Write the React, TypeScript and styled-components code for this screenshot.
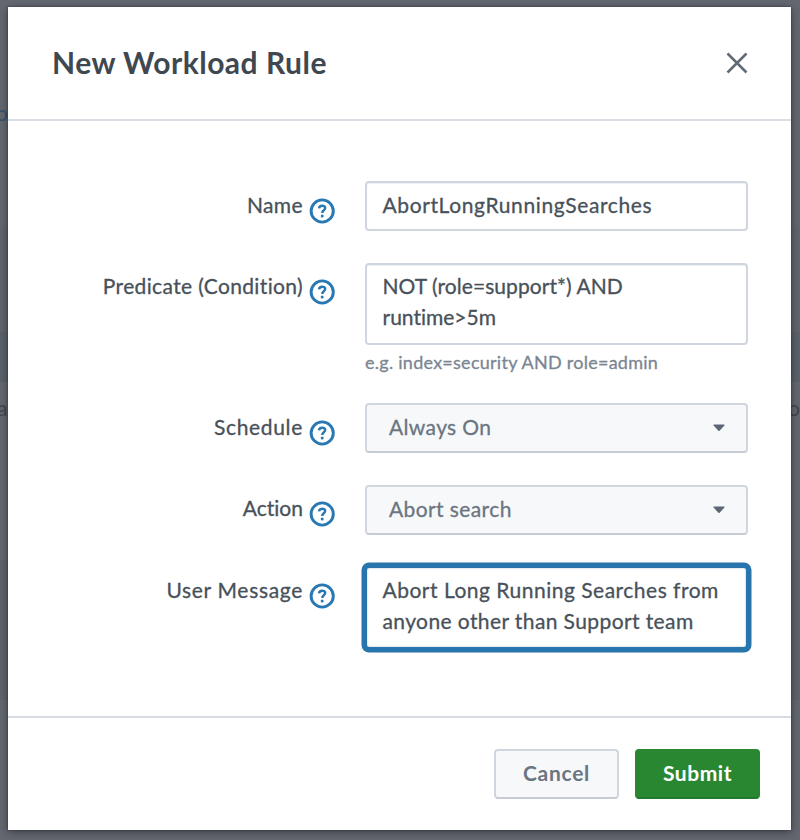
import React from "react";
import styled, { createGlobalStyle } from "styled-components";

const GlobalStyle = createGlobalStyle`
  * { box-sizing: border-box; }
  body {
    margin: 0;
    background: #646870;
    font-family: Lato, "Liberation Sans", sans-serif;
    font-variant-ligatures: none;
  }
`;

const Backdrop = styled.div`
  position: relative;
  width: 800px;
  height: 840px;
  padding: 7px 9px 10px 8px;
  overflow: hidden;
  background: linear-gradient(#646870 0 225px, #62666c 225px 332px, #5b626b 332px 382px, #646870 382px 560px, #5f646c 560px 700px, #646870 700px);
`;

const PageText = styled.span<{ $x: number; $y: number; $color: string }>`
  position: absolute;
  left: ${(p) => p.$x}px;
  top: ${(p) => p.$y}px;
  font-size: 21px;
  line-height: 24px;
  color: ${(p) => p.$color};
`;

const Dialog = styled.section`
  position: relative;
  display: flex;
  flex-direction: column;
  height: 823px;
  background: #fff;
  box-shadow: 0 0 2px rgba(25, 28, 34, 0.6), 0 2px 9px rgba(25, 28, 34, 0.55);
`;

const Header = styled.header`
  display: flex;
  align-items: center;
  justify-content: space-between;
  height: 114px;
  padding: 0 43px 1px 44px;
  border-bottom: 2px solid #d9dfe5;
`;

const Title = styled.h1`
  margin: 0;
  padding-bottom: 2px;
  font-size: 30px;
  line-height: 36px;
  font-weight: 700;
  letter-spacing: 0.5px;
  color: #3f4851;
`;

const CloseButton = styled.button`
  display: flex;
  padding: 0;
  border: 0;
  background: none;
`;

const Form = styled.form`
  display: flex;
  flex: 1;
  flex-direction: column;
  padding: 60px 43px 0 43px;
`;

const Row = styled.div<{ $height: number }>`
  display: grid;
  grid-template-columns: 283.5px 383px;
  column-gap: 30.5px;
  height: ${(p) => p.$height}px;
`;

const Label = styled.label<{ $spacing: number }>`
  display: flex;
  justify-content: flex-end;
  align-items: flex-start;
  gap: 5.5px;
  padding-top: 7.5px;
  font-size: 21px;
  line-height: 31px;
  letter-spacing: ${(p) => p.$spacing}px;
  color: #48515a;
  -webkit-text-stroke: 0.3px #48515a;
  white-space: nowrap;
`;

const HelpSvg = styled.svg`
  flex: none;
  margin-top: 9px;
`;

const Box = styled.div<{ $height: number; $focused?: boolean }>`
  height: ${(p) => p.$height}px;
  padding: 5.5px 15.5px;
  border: 2px solid ${(p) => (p.$focused ? "#2874ad" : "#d0d6df")};
  border-radius: 4px;
  background: #fff;
  box-shadow: ${(p) => (p.$focused ? "0 0 0 3.5px #2874ad, inset 0 0 2px #9fb3c6" : "inset 0 1px 1px #eef1f4")};
`;

const Line = styled.div<{ $spacing: number }>`
  font-size: 21px;
  line-height: 31px;
  letter-spacing: ${(p) => p.$spacing}px;
  color: #48515a;
  -webkit-text-stroke: 0.3px #48515a;
  white-space: nowrap;
`;

const Hint = styled.div`
  margin-top: 5.5px;
  font-size: 18px;
  line-height: 24px;
  letter-spacing: 0.26px;
  color: #7b8591;
  -webkit-text-stroke: 0.3px #7b8591;
  white-space: nowrap;
`;

const Select = styled.button<{ $spacing: number }>`
  display: flex;
  align-items: center;
  justify-content: space-between;
  width: 100%;
  height: 50px;
  padding: 0 21px 0 22px;
  border: 2px solid #d0d6df;
  border-bottom-color: #c6ccd5;
  border-radius: 4px;
  background: #f6f8fa;
  font: 400 21px/31px Lato, sans-serif;
  letter-spacing: ${(p) => p.$spacing}px;
  color: #6b7581;
  -webkit-text-stroke: 0.3px #6b7581;
`;

const SelectText = styled.span`
  padding-bottom: 3px;
`;

const Footer = styled.footer`
  display: flex;
  justify-content: flex-end;
  gap: 16px;
  height: 114px;
  padding: 31px 31px 0 0;
  border-top: 2px solid #d7dce4;
`;

const ActionButton = styled.button<{ $primary?: boolean; $spacing: number }>`
  width: 125px;
  height: 50px;
  padding: 0 0 3px;
  border: 2px solid ${(p) => (p.$primary ? "#2a8731" : "#d0d6df")};
  border-bottom-color: ${(p) => (p.$primary ? "#20782a" : "#c6ccd5")};
  border-radius: 4px;
  background: ${(p) => (p.$primary ? "#2a8731" : "#f6f8fa")};
  font: 700 21px/31px Lato, sans-serif;
  letter-spacing: ${(p) => p.$spacing}px;
  color: ${(p) => (p.$primary ? "#fff" : "#6b7581")};
`;

function HelpIcon() {
  return (
    <HelpSvg width="26" height="26" viewBox="0 0 26 26" fill="none" stroke="#2878b3">
      <circle cx="13.2" cy="13" r="11.1" strokeWidth="2.9" />
      <path d="M10 10.3C10.2 8.5 11.4 7.7 13.1 7.7C15 7.7 16.2 8.6 16.2 10.1C16.2 12.4 13.2 12.2 13.2 15" strokeWidth="2.4" />
      <circle cx="13.2" cy="18" r="1.5" fill="#2878b3" stroke="none" />
    </HelpSvg>
  );
}

function FieldLabel({ text, spacing }: { text: string; spacing: number }) {
  return (
    <Label $spacing={spacing}>
      <span>{text}</span>
      <HelpIcon />
    </Label>
  );
}

function Caret() {
  return (
    <svg width="12" height="8" viewBox="0 0 12 8">
      <path d="M1 0.5H11Q12 0.8 11.4 1.6L6.6 6.7Q6 7.3 5.4 6.7L0.6 1.6Q0 0.8 1 0.5Z" fill="#5c6773" />
    </svg>
  );
}

export default function App() {
  return (
    <>
      <GlobalStyle />
      <Backdrop>
        <PageText $x={-4} $y={101} $color="#34536d">o</PageText>
        <PageText $x={-3} $y={396} $color="#42474f">a</PageText>
        <PageText $x={788} $y={396} $color="#42474f">o</PageText>
        <Dialog>
          <Header>
            <Title>New Workload Rule</Title>
            <CloseButton type="button" aria-label="Close">
              <svg width="22" height="22" viewBox="0 0 22 22" stroke="#606b77" strokeWidth="2.5">
                <path d="M1.5 1.5L20.5 20.5M20.5 1.5L1.5 20.5" />
              </svg>
            </CloseButton>
          </Header>
          <Form>
            <Row $height={81.5}>
              <FieldLabel text="Name" spacing={0.4} />
              <Box $height={50}>
                <Line $spacing={0.62}>AbortLongRunningSearches</Line>
              </Box>
            </Row>
            <Row $height={140.5}>
              <FieldLabel text="Predicate (Condition)" spacing={0.36} />
              <div>
                <Box $height={82}>
                  <Line $spacing={0.06}>NOT (role=support*) AND</Line>
                  <Line $spacing={0}>runtime&gt;5m</Line>
                </Box>
                <Hint>e.g. index=security AND role=admin</Hint>
              </div>
            </Row>
            <Row $height={81.5}>
              <FieldLabel text="Schedule" spacing={0.67} />
              <Select type="button" $spacing={0.36}>
                <SelectText>Always On</SelectText>
                <Caret />
              </Select>
            </Row>
            <Row $height={81.5}>
              <FieldLabel text="Action" spacing={0} />
              <Select type="button" $spacing={0.4}>
                <SelectText>Abort search</SelectText>
                <Caret />
              </Select>
            </Row>
            <Row $height={83}>
              <FieldLabel text="User Message" spacing={0.68} />
              <Box $height={83} $focused>
                <Line $spacing={0.5}>Abort Long Running Searches from</Line>
                <Line $spacing={0.4}>anyone other than Support team</Line>
              </Box>
            </Row>
          </Form>
          <Footer>
            <ActionButton type="button" $spacing={0.7}>Cancel</ActionButton>
            <ActionButton type="button" $primary $spacing={0.55}>Submit</ActionButton>
          </Footer>
        </Dialog>
      </Backdrop>
    </>
  );
}
